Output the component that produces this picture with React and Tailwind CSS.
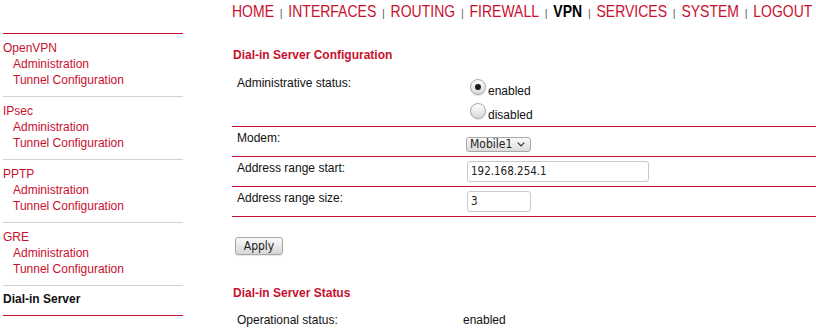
import React from 'react';

const RED = 'text-[#c8102e]';

const sections = [
  { name: 'OpenVPN', items: ['Administration', 'Tunnel Configuration'] },
  { name: 'IPsec', items: ['Administration', 'Tunnel Configuration'] },
  { name: 'PPTP', items: ['Administration', 'Tunnel Configuration'] },
  { name: 'GRE', items: ['Administration', 'Tunnel Configuration'] },
];

const nav = ['HOME', 'INTERFACES', 'ROUTING', 'FIREWALL', 'VPN', 'SERVICES', 'SYSTEM', 'LOGOUT'];

function Radio({ checked, label }) {
  return (
    <div className="flex items-end h-[24px]">
      <span className="w-[16px] h-[16px] mb-[4px] mr-[2px] rounded-full border border-[#a9a9a9] bg-gradient-to-b from-[#fdfdfd] to-[#d9d9d9] flex items-center justify-center shadow-[0_1px_1px_rgba(0,0,0,0.12)]">
        {checked && <span className="w-[6px] h-[6px] rounded-full bg-[#1a1a1a]" />}
      </span>
      <span className="text-[12px] leading-[16px]">{label}</span>
    </div>
  );
}

function Row({ label, h, pt, children }) {
  return (
    <div className={`flex border-b border-[#c8102e] ${h}`}>
      <div className={`w-[234px] pl-[5px] text-[12px] leading-[16px] ${pt}`}>{label}</div>
      <div className="flex-1">{children}</div>
    </div>
  );
}

export default function App() {
  return (
    <div className="w-[816px] h-[330px] bg-white overflow-hidden font-['Liberation_Sans',Arial,sans-serif] text-[#111]">
      <div className="flex">
        {/* sidebar */}
        <div className="w-[180px] ml-[3px] mt-[33px] shrink-0 text-[12px] leading-[16px]">
          <div className="border-t border-[#c8102e]" />
          {sections.map((s) => (
            <div key={s.name} className="border-b border-[#d2d2d2] pt-[6px] pb-[8px]">
              <div className={RED}>{s.name}</div>
              {s.items.map((it) => (
                <div key={it} className={`pl-[10px] ${RED}`}>{it}</div>
              ))}
            </div>
          ))}
          <div className="pt-[5px] pb-[8px] border-b border-[#c8102e] font-bold">Dial-in Server</div>
        </div>

        {/* main */}
        <div className="ml-[49px] flex-1">
          <div className="pt-[3px] h-[21px]">
            <div className="flex items-baseline text-[14px] leading-[18px] whitespace-nowrap scale-y-[1.15] origin-[50%_75%]">
              {nav.map((n, i) => (
                <React.Fragment key={n}>
                  {i > 0 && <span className="mx-[6px] text-[9px] leading-[10px] text-[#444]">|</span>}
                  <span className={n === 'VPN' ? 'font-bold text-black' : RED}>{n}</span>
                </React.Fragment>
              ))}
            </div>
          </div>

          <div className={`mt-[27px] ml-[1px] text-[12px] leading-[14px] font-bold ${RED}`}>
            Dial-in Server Configuration
          </div>

          <div className="mt-[7px]">
            <Row label="Administrative status:" h="h-[58px]" pt="pt-[6px]">
              <div className="pl-[4px] pt-[6px]">
                <Radio checked label="enabled" />
                <Radio label="disabled" />
              </div>
            </Row>
            <Row label="Modem:" h="h-[30px]" pt="pt-[3px]">
              <div className="mt-[10px] w-[65px] h-[15px] flex items-center pl-[3px] border border-[#a8a8a8] rounded-[3px] bg-gradient-to-b from-[#fafafa] to-[#dcdcdc] font-['DejaVu_Sans_Condensed','DejaVu_Sans',sans-serif] text-[12px] leading-[13px] text-[#222]">
                <span>Mobile1</span>
                <svg width="8" height="5" viewBox="0 0 8 5" className="ml-[5px]">
                  <path d="M0.7 0.7 L4 4 L7.3 0.7" stroke="#333" strokeWidth="1.2" fill="none" />
                </svg>
              </div>
            </Row>
            <Row label="Address range start:" h="h-[30px]" pt="pt-[3px]">
              <div className="mt-[4px] ml-[1px] w-[182px] h-[21px] border border-[#c9c9c9] rounded-[3px] pl-[3px] flex items-center font-['DejaVu_Sans_Condensed','DejaVu_Sans',sans-serif] text-[11.5px] text-[#222]">
                192.168.254.1
              </div>
            </Row>
            <Row label="Address range size:" h="h-[30px]" pt="pt-[3px]">
              <div className="mt-[4px] ml-[1px] w-[64px] h-[21px] border border-[#c9c9c9] rounded-[3px] pl-[3px] flex items-center font-['DejaVu_Sans_Condensed','DejaVu_Sans',sans-serif] text-[11.5px] text-[#222]">
                3
              </div>
            </Row>
          </div>

          <div className="mt-[20px] ml-[3px] flex w-[48px] h-[18px] items-center justify-center border border-[#a8a8a8] rounded-[3px] bg-gradient-to-b from-[#fafafa] to-[#d6d6d6] shadow-[0_1px_1px_rgba(0,0,0,0.1)] font-['DejaVu_Sans_Condensed','DejaVu_Sans',sans-serif] text-[12px] text-[#222]">
            Apply
          </div>

          <div className={`mt-[31px] ml-[1px] text-[12px] leading-[14px] font-bold ${RED}`}>
            Dial-in Server Status
          </div>
          <div className="flex mt-[12px] text-[12px] leading-[16px]">
            <div className="w-[231px] pl-[5px]">Operational status:</div>
            <div>enabled</div>
          </div>
        </div>
      </div>
    </div>
  );
}
